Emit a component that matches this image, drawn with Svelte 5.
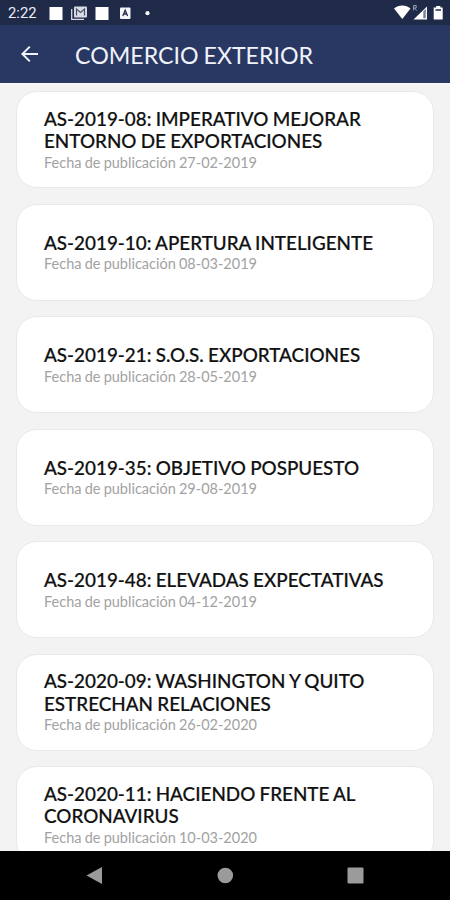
<script>
  const articles = [
    { title: ["AS-2019-08: IMPERATIVO MEJORAR", "ENTORNO DE EXPORTACIONES"], date: "27-02-2019" },
    { title: ["AS-2019-10: APERTURA INTELIGENTE"], date: "08-03-2019" },
    { title: ["AS-2019-21: S.O.S. EXPORTACIONES"], date: "28-05-2019" },
    { title: ["AS-2019-35: OBJETIVO POSPUESTO"], date: "29-08-2019" },
    { title: ["AS-2019-48: ELEVADAS EXPECTATIVAS"], date: "04-12-2019" },
    { title: ["AS-2020-09: WASHINGTON Y QUITO", "ESTRECHAN RELACIONES"], date: "26-02-2020" },
    { title: ["AS-2020-11: HACIENDO FRENTE AL", "CORONAVIRUS"], date: "10-03-2020" },
  ];
</script>

<style>
  :global(body) {
    margin: 0;
    background: #f3f3f3;
  }

  .screen {
    display: flex;
    flex-direction: column;
    height: 900px;
    overflow: hidden;
    font-family: Lato, "Liberation Sans", sans-serif;
  }

  .status {
    display: flex;
    flex: none;
    justify-content: space-between;
    height: 25px;
    background: #1f2a49;
    color: #eceef3;
  }

  .status-left {
    display: flex;
  }

  .time {
    width: 49px;
    box-sizing: border-box;
    padding-left: 8px;
    font-family: Roboto, sans-serif;
    font-size: 14.8px;
    line-height: 27px;
  }

  svg {
    display: block;
  }

  .appbar {
    display: flex;
    flex: none;
    align-items: center;
    height: 58px;
    background: #293862;
    color: #f0f2fa;
  }

  .back {
    display: flex;
    padding: 0;
    margin: 0 36px 0 20px;
    border: 0;
    background: none;
    color: inherit;
  }

  h1 {
    margin: 2px 0 0;
    font-size: 23.2px;
    font-weight: 400;
    line-height: 28px;
    white-space: nowrap;
    word-spacing: -1px;
  }

  .list {
    flex: 1;
    min-height: 0;
    box-sizing: border-box;
    padding: 7px 16px 0;
    overflow: hidden;
    background: #f3f3f3;
    border-top: 1px solid #fafafc;
  }

  .card {
    display: flex;
    flex-direction: column;
    justify-content: center;
    box-sizing: border-box;
    height: 97px;
    margin-bottom: 15.5px;
    padding: 0.5px 27px 0;
    border: 1px solid #e9e9e9;
    border-radius: 21px;
    background: #fff;
  }

  h2 {
    margin: 0;
    color: #111;
    font-size: 18.85px;
    font-weight: 500;
    line-height: 22.75px;
    white-space: nowrap;
    word-spacing: -0.5px;
    -webkit-text-stroke: 0.2px #111;
  }

  h2 span {
    display: block;
  }

  .card p {
    margin: 0.75px 0 0;
    color: #a2a2a2;
    font-size: 14.5px;
    line-height: 18px;
    word-spacing: -0.5px;
  }

  .nav {
    flex: none;
    height: 49px;
    background: #000;
  }
</style>

<main class="screen">
  <div class="status">
    <div class="status-left">
      <span class="time">2:22</span>
      <svg width="106" height="25" viewBox="49 0 106 25">
        <path fill="#fff" d="M49.5 7h13v13h-13zM95.5 7h13v13h-13z" />
        <path fill="none" stroke="#d9dce5" stroke-width="1.3" d="M71.7 9v10.3H84" />
        <rect x="74" y="6.5" width="13" height="11" rx="1" fill="#d9dce5" />
        <path fill="none" stroke="#4a5164" stroke-width="1.2" d="M76.5 15.5V9l4 3.5 4-3.5v6.5" />
        <rect x="120" y="7.5" width="10.5" height="11.5" rx="1" fill="#f5f6fa" />
        <path fill="none" stroke="#26304d" stroke-width="1.3" d="M122.8 16l2.4-5.8 2.4 5.8M123.5 14h3.4" />
        <circle cx="147.5" cy="13.2" r="2.1" fill="#f5f6fa" />
      </svg>
    </div>
    <svg width="58" height="25" viewBox="392 0 58 25">
      <path fill="#fff" d="M394 8.5C398.5 4.5 406 4.5 410.5 8.5L402.3 19z" />
      <path fill="#fff" d="M427 6.5v13h-13.5z" />
      <path fill="#7b8398" d="M423.3 11.3l2.5-2.5v9.5h-2.5z" />
      <path fill="none" stroke="#9aa1b3" stroke-width="1" d="M413.6 10.5v-5h2.6v2.5h-2.6m1.2 0l1.7 2.5" />
      <path fill="#fff" d="M436.2 6h4.2v1.5h2.3v12h-9v-12h2.5z" />
      <path fill="#59617a" d="M435.5 9h5.5v2h-5.5z" />
    </svg>
  </div>

  <header class="appbar">
    <button class="back" aria-label="Atrás">
      <svg width="19" height="18" viewBox="0 0 19 18">
        <path fill="none" stroke="currentColor" stroke-width="2" d="M18 9H2.5M9.8 1.6L2.4 9l7.4 7.4" />
      </svg>
    </button>
    <h1>COMERCIO EXTERIOR</h1>
  </header>

  <section class="list">
    {#each articles as article}
      <article class="card">
        <h2>
          {#each article.title as line}
            <span>{line}</span>
          {/each}
        </h2>
        <p>Fecha de publicación {article.date}</p>
      </article>
    {/each}
  </section>

  <nav class="nav">
    <svg width="450" height="49" viewBox="0 851 450 49" fill="#9b9b9b">
      <path d="M86.5 875.5L102 867v17z" />
      <circle cx="225.3" cy="875.5" r="7.8" />
      <rect x="347.5" y="867.5" width="16" height="16" rx="1" />
    </svg>
  </nav>
</main>
